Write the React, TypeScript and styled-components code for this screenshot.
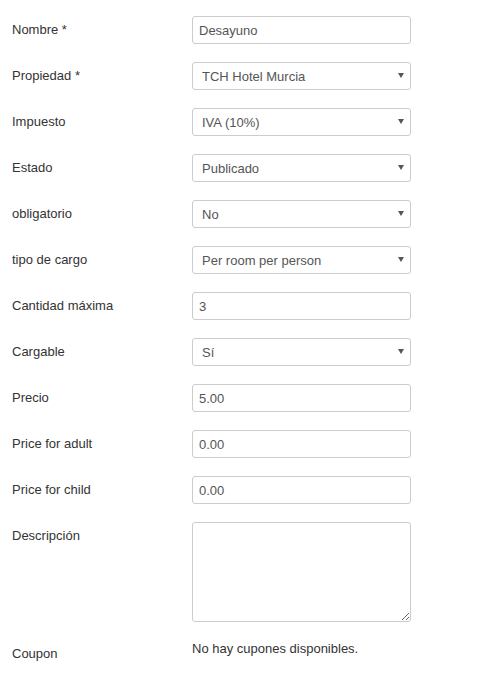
import React from "react";
import styled, { createGlobalStyle } from "styled-components";

const Global = createGlobalStyle`
  html, body { margin: 0; padding: 0; background: #fff; }
  body { font-family: "Liberation Sans", Arial, sans-serif; font-size: 13px; color: #333; }
`;

const Form = styled.form`
  display: grid;
  grid-template-columns: 180px 220px;
  row-gap: 18px;
  padding: 16px 0 0 12px;
`;

const Label = styled.label`
  line-height: 28px;
  color: #333;
`;

const Field = styled.input`
  box-sizing: border-box;
  width: 219px;
  height: 28px;
  border: 1px solid #ccc;
  border-radius: 3px;
  padding: 0 6px;
  font: inherit;
  color: #555;
  background: #fff;
  outline: none;
`;

const SelectWrap = styled.div`
  position: relative;
  width: 219px;
  height: 28px;
`;

const Select = styled.select`
  box-sizing: border-box;
  appearance: none;
  -webkit-appearance: none;
  width: 100%;
  height: 28px;
  border: 1px solid #ccc;
  border-radius: 3px;
  padding: 0 6px 0 9px;
  font: inherit;
  color: #555;
  background: #fff;
  outline: none;
`;

const Arrow = styled.span`
  position: absolute;
  right: 7px;
  top: 11px;
  width: 0;
  height: 0;
  border-left: 3px solid transparent;
  border-right: 3px solid transparent;
  border-top: 5px solid #555;
  pointer-events: none;
`;

const Area = styled.textarea`
  box-sizing: border-box;
  width: 219px;
  height: 100px;
  border: 1px solid #ccc;
  border-radius: 3px;
  padding: 6px;
  font: inherit;
  color: #555;
  resize: vertical;
  outline: none;
`;

const Note = styled.div`
  line-height: 18px;
  color: #333;
`;

type Row = { label: string; kind: "input" | "select"; value: string };

const rows: Row[] = [
  { label: "Nombre *", kind: "input", value: "Desayuno" },
  { label: "Propiedad *", kind: "select", value: "TCH Hotel Murcia" },
  { label: "Impuesto", kind: "select", value: "IVA (10%)" },
  { label: "Estado", kind: "select", value: "Publicado" },
  { label: "obligatorio", kind: "select", value: "No" },
  { label: "tipo de cargo", kind: "select", value: "Per room per person" },
  { label: "Cantidad máxima", kind: "input", value: "3" },
  { label: "Cargable", kind: "select", value: "Sí" },
  { label: "Precio", kind: "input", value: "5.00" },
  { label: "Price for adult", kind: "input", value: "0.00" },
  { label: "Price for child", kind: "input", value: "0.00" },
];

export default function App() {
  return (
    <>
      <Global />
      <Form onSubmit={(e) => e.preventDefault()}>
        {rows.map((r) => (
          <React.Fragment key={r.label}>
            <Label>{r.label}</Label>
            {r.kind === "input" ? (
              <Field defaultValue={r.value} />
            ) : (
              <SelectWrap>
                <Select defaultValue={r.value}>
                  <option>{r.value}</option>
                </Select>
                <Arrow />
              </SelectWrap>
            )}
          </React.Fragment>
        ))}
        <Label>Descripción</Label>
        <Area />
        <Label>Coupon</Label>
        <Note>No hay cupones disponibles.</Note>
      </Form>
    </>
  );
}
